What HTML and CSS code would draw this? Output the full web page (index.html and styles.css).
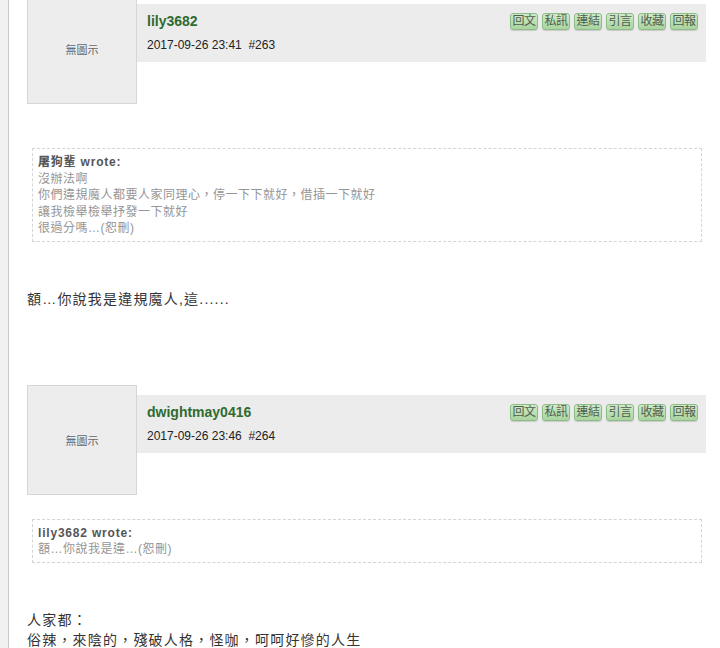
FILE: index.html
```html
<!DOCTYPE html>
<html lang="zh-Hant">
<head>
  <meta charset="UTF-8">
  <meta name="viewport" content="width=device-width, initial-scale=1">
  <title>討論區</title>
  <link rel="stylesheet" href="styles.css">
</head>
<body>

<div class="main">
  <div class="thread">

    <div class="post">
      <div class="post-head">
        <div class="avatar">無圖示</div>
        <div class="info-bar">
          <div class="info">
            <div class="username">lily3682</div>
            <div class="meta">2017-09-26 23:41&nbsp; #263</div>
          </div>
          <div class="actions">
            <span class="btn">回文</span>
            <span class="btn">私訊</span>
            <span class="btn">連結</span>
            <span class="btn">引言</span>
            <span class="btn">收藏</span>
            <span class="btn">回報</span>
          </div>
        </div>
      </div>
      <div class="post-body spaced">
        <div class="quote">
          <div class="quote-title">屠狗輩 wrote:</div>
          沒辦法啊<br>
          你們違規魔人都要人家同理心，停一下下就好，借插一下就好<br>
          讓我檢舉檢舉抒發一下就好<br>
          很過分嗎…(恕刪)
        </div>
        <div class="content">額…你說我是違規魔人,這......</div>
      </div>
    </div>

    <div class="post">
      <div class="post-head">
        <div class="avatar">無圖示</div>
        <div class="info-bar">
          <div class="info">
            <div class="username">dwightmay0416</div>
            <div class="meta">2017-09-26 23:46&nbsp; #264</div>
          </div>
          <div class="actions">
            <span class="btn">回文</span>
            <span class="btn">私訊</span>
            <span class="btn">連結</span>
            <span class="btn">引言</span>
            <span class="btn">收藏</span>
            <span class="btn">回報</span>
          </div>
        </div>
      </div>
      <div class="post-body">
        <div class="quote">
          <div class="quote-title">lily3682 wrote:</div>
          額…你說我是違…(恕刪)
        </div>
        <div class="content">人家都：<br>俗辣，來陰的，殘破人格，怪咖，呵呵好慘的人生</div>
      </div>
    </div>

  </div>
</div>

</body>
</html>
```

FILE: styles.css
```css
/* general */
body {
  margin: 0;
  background-color: #f1f1f1;
  font-family: "Liberation Sans", Arial, "Noto Sans CJK TC", sans-serif;
  color: #333;
  overflow: hidden;
}
.main {
  margin-left: 8px;
  border-left: 1px solid #c8c8c8;
  background-color: #fff;
  min-height: 100vh;
  padding: 0 14px 0 18px;
}
.thread {
  margin-top: -6px;
}

/* post header */
.post {
  margin-bottom: 76px;
}
.post-head {
  display: flex;
  align-items: flex-start;
}
.avatar {
  box-sizing: border-box;
  width: 110px;
  height: 110px;
  background-color: #ededed;
  border: 1px solid #d6d6d6;
  display: flex;
  align-items: center;
  justify-content: center;
  font-size: 11px;
  color: #666;
}
.info-bar {
  box-sizing: border-box;
  flex: 1;
  display: flex;
  justify-content: space-between;
  align-items: flex-start;
  height: 58px;
  margin-top: 10px;
  padding: 9px 8px 0 10px;
  background-color: #ececec;
}
.username {
  font-size: 14px;
  font-weight: bold;
  line-height: 18px;
  margin-top: -1px;
  color: #2f6b2f;
}
.meta {
  font-size: 12px;
  line-height: 16px;
  margin-top: 7px;
  color: #222;
}
.actions {
  display: flex;
  gap: 4px;
}
.btn {
  display: block;
  width: 26px;
  height: 15px;
  line-height: 15px;
  text-align: center;
  font-size: 12px;
  letter-spacing: -0.5px;
  color: #4f5f4f;
  background: linear-gradient(#d0eac8, #a9d49f);
  border: 1px solid #8dbd86;
  border-radius: 3px;
  box-shadow: 0 1px 1px rgba(0, 0, 0, 0.15);
}

/* post body */
.post-body {
  padding-top: 24px;
}
.post-body.spaced {
  padding-top: 44px;
}
.quote {
  margin: 0 4px 0 5px;
  padding: 5px 5px 4px;
  border: 1px dashed #d4d4d4;
  font-size: 12px;
  line-height: 16.5px;
  letter-spacing: 0.5px;
  color: #959595;
}
.quote-title {
  font-weight: bold;
  color: #555;
  letter-spacing: 0.8px;
}
.content {
  margin-top: 47px;
  font-size: 14px;
  line-height: 20px;
  letter-spacing: 1.2px;
  color: #333;
}
```
